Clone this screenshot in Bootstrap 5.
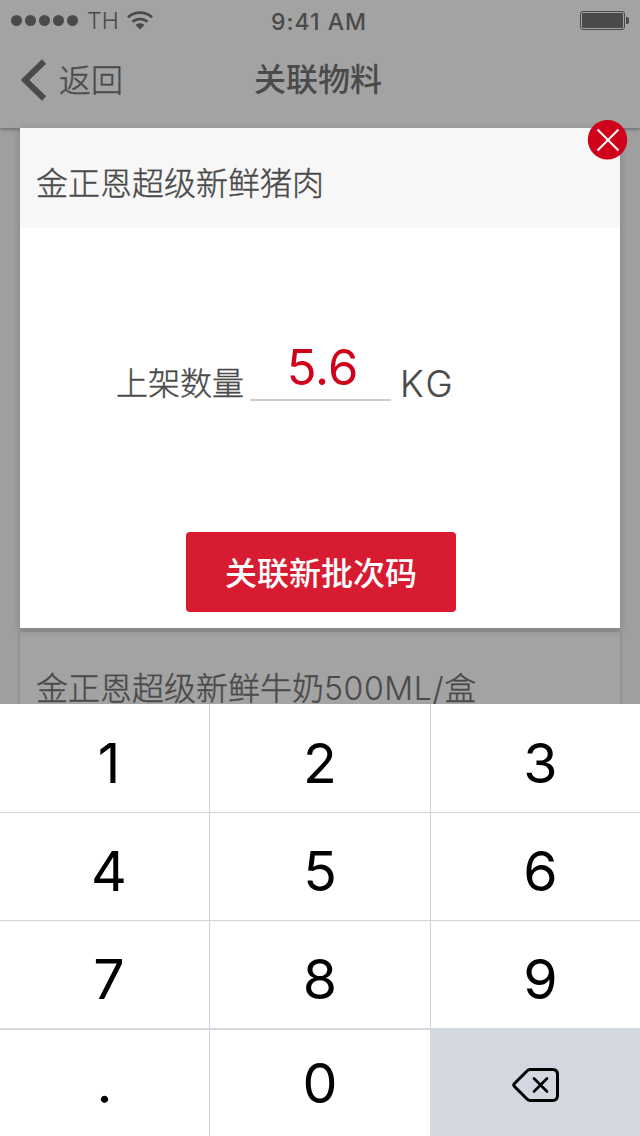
<!DOCTYPE html>
<html lang="zh-CN">
<head>
<meta charset="utf-8">
<meta name="viewport" content="width=device-width, initial-scale=1">
<title>关联物料</title>
<link rel="stylesheet" href="https://cdn.jsdelivr.net/npm/bootstrap@5.3.0/dist/css/bootstrap.min.css">
<style>
body{font-family:Inter,"Noto Sans CJK SC",sans-serif;color:#4a4a4a;background:#9f9f9f;}
.screen{width:640px;height:1136px;}
.thin{font-weight:300;-webkit-text-stroke:.4px currentColor;}
.top-area{height:128px;background:#a3a3a3;box-shadow:0 1px 4px rgba(0,0,0,.4);}
.status{height:40px;font-size:23px;line-height:40px;}
.status .sig{margin-left:11px;}
.status .carrier{margin:2px 0 0 8px;font-weight:300;letter-spacing:.2px;}
.status .wifi{margin-left:8px;}
.status .batt{margin-right:11px;}
.clock{font-weight:500;font-size:23px;letter-spacing:1px;top:2px;left:-1px;}
.titlebar{height:88px;font-size:32px;line-height:48px;}
.titlebar .back{padding-left:20px;padding-top:17px;}
.titlebar .heading{padding-top:16px;left:-2px;font-weight:500;}
.body-area{height:576px;}
.sheet{height:500px;margin:0 20px;background:#fff;box-shadow:0 2px 8px rgba(0,0,0,.2);}
.sheet-title{height:100px;background:#f7f7f7;font-size:32px;line-height:48px;padding:32px 16px 0;}
.sheet-main{height:304px;padding-left:96px;}
.qty-row{padding-top:106px;height:173px;}
.qty-label{font-size:32px;line-height:48px;margin-top:26px;}
.qty-field{width:141px;height:67px;margin-left:6px;border-bottom:2px solid #ccc;color:#d0021b;font-size:49px;line-height:67px;padding-left:4px;}
.qty-unit{font-size:36.500px;line-height:48px;margin:26px 0 0 9px;letter-spacing:3px;-webkit-text-stroke-width:.2px;}
.btn-link-new{width:270px;height:80px;margin-left:166px;border-radius:4px;background:#d71c32;color:#fff;font-size:32px;font-weight:500;padding:3px 0 0;}
.shut{right:-8px;top:-9px;width:41px;height:41px;}
.next-card{height:72px;margin:4px 20px 0;background:#a3a3a3;box-shadow:0 0 4px rgba(0,0,0,.22);font-size:32px;line-height:48px;padding:33px 16px 0;}
.latin{letter-spacing:.6px;-webkit-text-stroke-width:.1px;}
.pad{display:grid;grid-template-columns:210px 221px 209px;grid-template-rows:109px 108px 109px 106px;height:432px;background:#fff;color:#000;font-size:55.500px;line-height:66px;}
.pad>div{border-right:1px solid #d1d4dd;border-bottom:1px solid #d1d4dd;text-align:center;padding-top:26px;}
.pad>div:nth-child(3n){border-right:0;padding-left:10px;}
.pad>div:nth-child(3n+1){padding-left:9px;}
.pad>div:nth-child(n+4){padding-top:25px;}
.pad>div:nth-child(n+7){border-bottom-width:2px;border-bottom-color:#d3d8de;}
.pad>div:nth-child(n+10){border-bottom:0;padding-top:20px;}
.pad>div.point{padding-left:0;}
.pad>div.erase{background:#d3d7e0;margin:-2px 0 0 -1px;padding:39px 0 0 2px;line-height:0;}
</style>
</head>
<body>
<div class="screen d-flex flex-column overflow-hidden">
  <header class="top-area flex-shrink-0">
    <div class="status d-flex align-items-center position-relative">
      <svg class="sig" width="68" height="12" fill="#4a4a4a"><circle cx="5.5" cy="6.5" r="5.5"/><circle cx="19.5" cy="6.5" r="5.5"/><circle cx="33.5" cy="6.5" r="5.5"/><circle cx="47.5" cy="6.5" r="5.5"/><circle cx="61.5" cy="6.5" r="5.5"/></svg>
      <span class="carrier">TH</span>
      <svg class="wifi" width="26" height="19" viewBox="0 0 26 19" fill="none" stroke="#4a4a4a"><path d="M1 6.200C8 .2 18 .2 25 6.200" stroke-width="2.800"/><path d="M5.500 10.800C9.800 7 16.200 7 20.500 10.800" stroke-width="2.600"/><path d="M8.500 14c2.500-2.400 6.500-2.400 9 0L13 18.500z" fill="#4a4a4a" stroke="none"/></svg>
      <span class="clock position-absolute w-100 text-center">9:41 AM</span>
      <svg class="batt ms-auto" width="49" height="20" viewBox="0 0 49 20"><rect x=".5" y="1.500" width="44" height="18" rx="2.500" fill="none" stroke="#4a4a4a"/><rect x="2" y="3" width="41" height="15" rx="1" fill="#4a4a4a"/><path d="M46 7h1a2 2 0 0 1 2 2v3a2 2 0 0 1-2 2h-1z" fill="#4a4a4a"/></svg>
    </div>
    <div class="titlebar d-flex position-relative">
      <div class="back d-flex"><svg width="27" height="42" viewBox="0 0 27 42" style="margin-top:2px"><path d="M24 2.500L5 21 24 39.500" fill="none" stroke="#4a4a4a" stroke-width="6"/></svg><span class="thin ms-2 ps-1">返回</span></div>
      <div class="heading position-absolute w-100 text-center">关联物料</div>
    </div>
  </header>
  <main class="body-area flex-shrink-0">
    <section class="sheet position-relative">
      <div class="sheet-title thin">金正恩超级新鲜猪肉</div>
      <div class="sheet-main">
        <div class="qty-row d-flex align-items-start"><span class="qty-label thin">上架数量</span><div class="qty-field text-center">5.6</div><span class="qty-unit thin">KG</span></div>
      </div>
      <button class="btn btn-link-new" type="button">关联新批次码</button>
      <svg class="shut position-absolute" viewBox="0 0 41 41"><circle cx="20.500" cy="20.700" r="19.700" fill="#d0021b"/><path d="M10.500 10.500L31.500 31.500M31.500 10.500L10.500 31.500" stroke="#fff" stroke-width="2"/></svg>
    </section>
    <section class="next-card thin">金正恩超级新鲜牛奶<span class="latin">500ML/</span>盒</section>
  </main>
  <div class="pad flex-shrink-0 position-relative">
    <div>1</div><div>2</div><div>3</div>
    <div>4</div><div>5</div><div>6</div>
    <div>7</div><div>8</div><div>9</div>
    <div class="point">.</div><div>0</div>
    <div class="erase"><svg width="48" height="36" viewBox="0 0 48 36" fill="none" stroke="#000" stroke-width="3" stroke-linejoin="round" stroke-linecap="round"><path d="M18 2.500H40.500Q45.500 2.500 45.500 7.500V28.500Q45.500 33.500 40.500 33.500H18Q16.500 33.500 15 32L2.500 19.500Q1 18 2.500 16.500L15 4Q16.500 2.500 18 2.500Z"/><path d="M22 11.500l13 13M35 11.500l-13 13" stroke-width="2.600"/></svg></div>
  </div>
</div>
<script src="https://cdn.jsdelivr.net/npm/bootstrap@5.3.0/dist/js/bootstrap.bundle.min.js"></script>
</body>
</html>
